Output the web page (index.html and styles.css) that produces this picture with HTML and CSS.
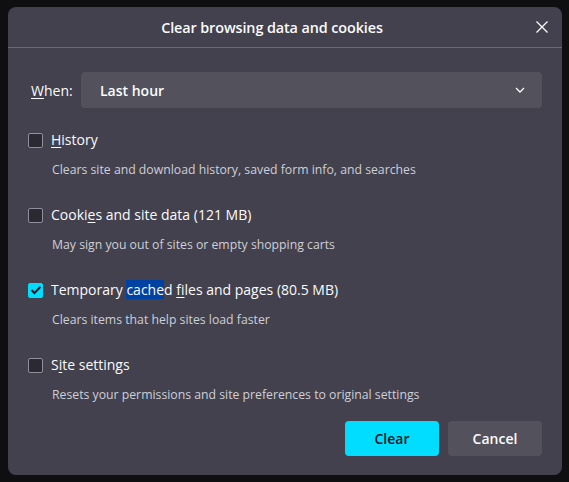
FILE: index.html
```html
<!DOCTYPE html>
<html>
<head>
<meta charset="utf-8">
<link rel="stylesheet" href="styles.css">
</head>
<body>
<div class="dialog">
  <div class="header">
    <div class="title">Clear browsing data and cookies</div>
    <svg class="close" width="12" height="12" viewBox="0 0 12 12"><path d="M0.5 0.5 L11.5 11.5 M11.5 0.5 L0.5 11.5" stroke="#fbfbfe" stroke-width="1.3" fill="none"/></svg>
  </div>
  <div class="body">
    <div class="when">
      <span class="when-label"><u>W</u>hen:</span>
      <div class="select">
        <span>Last hour</span>
        <svg width="10" height="6" viewBox="0 0 10 6"><path d="M1 1 L5 5 L9 1" stroke="#fbfbfe" stroke-width="1.3" fill="none"/></svg>
      </div>
    </div>
    <div class="items">
      <div class="item">
        <div class="row"><span class="box"></span><span class="label"><u>H</u>istory</span></div>
        <div class="desc">Clears site and download history, saved form info, and searches</div>
      </div>
      <div class="item">
        <div class="row"><span class="box"></span><span class="label">Cooki<u>e</u>s and site data (121 MB)</span></div>
        <div class="desc">May sign you out of sites or empty shopping carts</div>
      </div>
      <div class="item">
        <div class="row"><span class="box checked"><svg width="12" height="10" viewBox="0 0 12 10"><path d="M1.5 5 L4.5 8 L10.5 1.8" stroke="#15141a" stroke-width="2" fill="none"/></svg></span><span class="label">Temporary <span class="sel">cache</span>d <u>f</u>iles and pages (80.5 MB)</span></div>
        <div class="desc">Clears items that help sites load faster</div>
      </div>
      <div class="item">
        <div class="row"><span class="box"></span><span class="label">S<u>i</u>te settings</span></div>
        <div class="desc">Resets your permissions and site preferences to original settings</div>
      </div>
    </div>
    <div class="buttons">
      <button class="btn primary">Clear</button>
      <button class="btn">Cancel</button>
    </div>
  </div>
</div>
</body>
</html>
```
FILE: styles.css
```css
html, body {
  margin: 0;
  padding: 0;
  background: #0f0f12;
  width: 569px;
  height: 482px;
  overflow: hidden;
  font-family: "Open Sans", "Noto Sans", sans-serif;
}
.dialog {
  margin: 7px 7px 7px 8px;
  width: 554px;
  height: 468px;
  background: #42414d;
  border-radius: 8px;
  color: #fbfbfe;
  display: flex;
  flex-direction: column;
}
.header {
  height: 40px;
  border-bottom: 1px solid #6c6b75;
  display: flex;
  align-items: center;
}
.title {
  flex: 1;
  text-align: center;
  font-size: 14.4px;
  font-weight: 600;
  letter-spacing: -0.1px;
}
.close {
  margin-right: 14px;
  flex: none;
}
.body {
  padding: 24px 20px 19px 20px;
  display: flex;
  flex-direction: column;
  flex: 1;
}
.when {
  display: flex;
  align-items: center;
}
.when-label {
  font-size: 14px;
  width: 50px;
  padding-left: 3px;
}
.select {
  flex: 1;
  height: 36px;
  background: #52515c;
  border-radius: 4px;
  display: flex;
  align-items: center;
  justify-content: space-between;
  padding: 0 17px 0 19px;
  font-size: 14px;
  font-weight: 600;
}
.items {
  display: flex;
  flex-direction: column;
  gap: 25px;
  margin-top: 21px;
}
.item {
  display: flex;
  flex-direction: column;
}
.row {
  display: flex;
  align-items: center;
  height: 20px;
}
.box {
  width: 13px;
  height: 13px;
  border: 1.5px solid #8f8f9d;
  background: #2b2a33;
  border-radius: 2px;
  margin-right: 8px;
  margin-top: 2px;
  display: flex;
  align-items: center;
  justify-content: center;
}
.box.checked {
  background: #00ddff;
  border-color: #00ddff;
}
.label {
  font-size: 14px;
}
.sel {
  background: #0041a4;
}
.desc {
  margin-top: 12px;
  margin-left: 24px;
  font-size: 12.25px;
  line-height: 18px;
  color: #cfcfd8;
}
.buttons {
  margin-top: auto;
  display: flex;
  justify-content: flex-end;
  gap: 9px;
}
.btn {
  width: 94px;
  height: 35px;
  border: none;
  border-radius: 4px;
  background: #52515c;
  color: #fbfbfe;
  font-family: inherit;
  font-size: 14px;
  font-weight: 600;
}
.btn.primary {
  background: #00ddff;
  color: #15141a;
}
u {
  text-underline-offset: 2px;
}
```
